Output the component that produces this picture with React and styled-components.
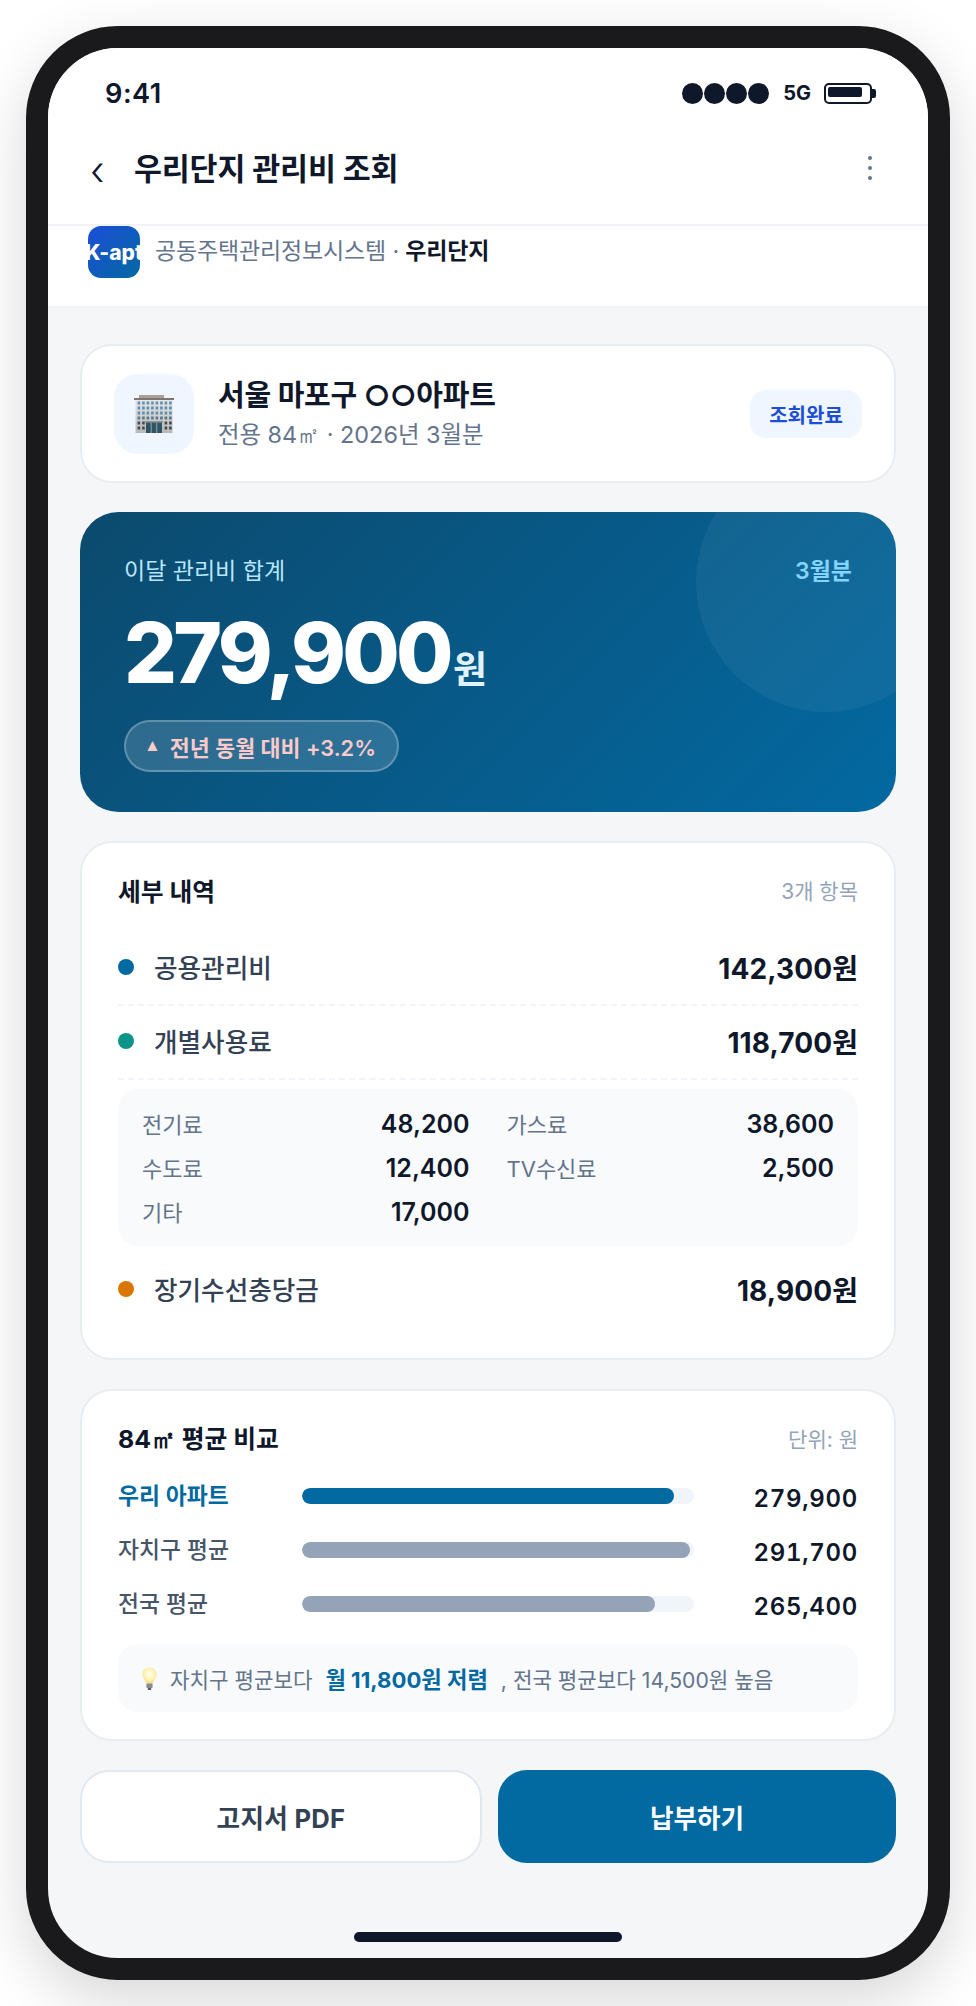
import React from "react";
import styled, { createGlobalStyle } from "styled-components";

const GlobalStyle = createGlobalStyle`
  * { box-sizing: border-box; }
  html, body { margin: 0; padding: 0; background: #fff; }
  body {
    font-family: Inter, "Noto Sans CJK KR", sans-serif;
    color: #0f172a;
  }
`;

const Page = styled.div`
  width: 976px;
  height: 2006px;
  padding: 26px;
  overflow: hidden;
`;

const Phone = styled.div`
  width: 924px;
  height: 1954px;
  border: 22px solid #1a1a1c;
  border-radius: 92px;
  background: #f5f6f8;
  box-shadow: 0 20px 60px rgba(0, 0, 0, 0.16);
  overflow: hidden;
  display: flex;
  flex-direction: column;
`;

const StatusBar = styled.div`
  height: 90px;
  flex: none;
  background: #fff;
  padding: 0 56px 0 57px;
  display: flex;
  align-items: center;
  justify-content: space-between;
`;

const Clock = styled.span`
  font-size: 27.2px;
  font-weight: 600;
  letter-spacing: 0.5px;
`;

const StatusIcons = styled.div`
  display: flex;
  align-items: center;
`;

const Signal = styled.div`
  display: flex;
  gap: 1px;
  margin-right: 14px;
`;

const SignalDot = styled.span`
  width: 21px;
  height: 21px;
  border-radius: 50%;
  background: #0f172a;
`;

const Network = styled.span`
  font-size: 20px;
  font-weight: 700;
  margin-right: 13px;
`;

const Battery = styled.div`
  position: relative;
  width: 48px;
  height: 21px;
  border: 2px solid #0f172a;
  border-radius: 5px;
  padding: 2px;
  &::after {
    content: "";
    position: absolute;
    right: -6px;
    top: 4px;
    width: 4px;
    height: 9px;
    border-radius: 0 2px 2px 0;
    background: #0f172a;
  }
`;

const BatteryFill = styled.div`
  width: 34px;
  height: 10px;
  border-radius: 2px;
  background: #0f172a;
`;

const Header = styled.header`
  height: 88px;
  flex: none;
  background: #fff;
  border-bottom: 2px solid #f1f2f6;
  padding: 0 56px 26px 42px;
  display: flex;
  align-items: center;
`;

const Back = styled.span`
  width: 44px;
  font-size: 40px;
  font-weight: 300;
  line-height: 1;
  color: #0f172a;
  margin-top: 6px;
`;

const Title = styled.h1`
  flex: 1;
  margin: -3px 0 0;
  font-size: 30.4px;
  font-weight: 700;
  letter-spacing: -0.15px;
`;

const More = styled.div`
  display: flex;
  flex-direction: column;
  gap: 6px;
`;

const MoreDot = styled.span`
  width: 4px;
  height: 4px;
  border-radius: 50%;
  background: #64748b;
`;

const SourceBar = styled.div`
  height: 82px;
  flex: none;
  background: #fff;
  border-bottom: 2px solid #f1f2f6;
  padding: 0 40px;
  display: flex;
  align-items: flex-start;
  gap: 15px;
`;

const Logo = styled.div`
  width: 52px;
  height: 52px;
  flex: none;
  border-radius: 13px;
  background: linear-gradient(135deg, #1d4ed8, #0369a1);
  color: #fff;
  font-size: 21px;
  font-weight: 800;
  display: flex;
  align-items: center;
  justify-content: center;
  overflow: hidden;
  white-space: nowrap;
`;

const SourceText = styled.div`
  font-size: 23px;
  line-height: 50px;
  color: #64748b;
  letter-spacing: -0.15px;
  b {
    color: #0f172a;
    font-weight: 600;
  }
`;

const Content = styled.main`
  padding: 36px 32px 0;
  display: flex;
  flex-direction: column;
  gap: 29px;
`;

const Card = styled.section`
  background: #fff;
  border: 2px solid #e9edf2;
  border-radius: 32px;
`;

const AptCard = styled(Card)`
  padding: 28px 32px 27px;
  display: flex;
  align-items: center;
  gap: 24px;
`;

const AptIcon = styled.div`
  width: 80px;
  height: 80px;
  flex: none;
  border-radius: 24px;
  background: #eff6ff;
  display: flex;
  align-items: center;
  justify-content: center;
`;

const AptInfo = styled.div`
  flex: 1;
`;

const AptName = styled.div`
  font-size: 29px;
  font-weight: 700;
  line-height: 40px;
  letter-spacing: -0.2px;
  margin-top: 1px;
`;

const AptMeta = styled.div`
  font-size: 23.4px;
  line-height: 38px;
  color: #64748b;
`;

const Square = styled.span`
  font-family: "DejaVu Sans", sans-serif;
`;

const Badge = styled.span`
  width: 112px;
  height: 48px;
  border-radius: 16px;
  background: #eff6ff;
  color: #1d4ed8;
  font-size: 20px;
  font-weight: 700;
  display: flex;
  align-items: center;
  justify-content: center;
`;

const Hero = styled.section`
  position: relative;
  height: 300px;
  border-radius: 38.4px;
  padding: 44px 44px 0;
  background: linear-gradient(135deg, #0c4a6e, #0369a1);
  overflow: hidden;
  color: #fff;
  &::before {
    content: "";
    position: absolute;
    top: -60px;
    right: -60px;
    width: 260px;
    height: 260px;
    border-radius: 50%;
    background: rgba(255, 255, 255, 0.05);
  }
`;

const HeroTop = styled.div`
  display: flex;
  justify-content: space-between;
  line-height: 30px;
  font-size: 23px;
  color: #bae6fd;
`;

const HeroMonth = styled.span`
  color: #7dd3fc;
  font-weight: 600;
`;

const HeroAmount = styled.div`
  margin-top: 20px;
  height: 94px;
  display: flex;
  align-items: baseline;
  gap: 3px;
  font-size: 83.2px;
  line-height: 94px;
  font-weight: 800;
  letter-spacing: -3.7px;
`;

const HeroUnit = styled.span`
  font-size: 37px;
  font-weight: 600;
  letter-spacing: 0;
  color: #e0f2fe;
`;

const Trend = styled.div`
  display: inline-flex;
  align-items: center;
  margin-top: 20px;
  height: 52px;
  padding: 0 21px 0 18px;
  border: 2px solid rgba(255, 255, 255, 0.25);
  border-radius: 26px;
  background: rgba(255, 255, 255, 0.15);
  color: #fecaca;
  font-size: 21.7px;
  font-weight: 600;
`;

const TrendArrow = styled.span`
  font-family: "Liberation Sans", sans-serif;
  font-size: 17px;
  margin-right: 9px;
`;

const DetailCard = styled(Card)`
  padding: 30px 36px 32px;
`;

const CardHead = styled.div`
  display: flex;
  justify-content: space-between;
  align-items: center;
  height: 36px;
  padding-bottom: 3px;
`;

const CardTitle = styled.h2`
  margin: 0;
  font-size: 24.8px;
  font-weight: 700;
`;

const CardHint = styled.span`
  font-size: 21px;
  color: #94a3b8;
`;

const FeeList = styled.div`
  margin-top: 23px;
`;

const FeeRow = styled.div`
  height: ${(p) => (p.$last ? "72px" : "74px")};
  padding-bottom: 3px;
  display: flex;
  align-items: center;
  border-bottom: ${(p) => (p.$last ? "none" : "2px dashed #f1f5f9")};
`;

const FeeDot = styled.span`
  width: 16px;
  height: 16px;
  border-radius: 50%;
  margin-right: 20px;
  background: ${(p) => p.$color};
`;

const FeeName = styled.span`
  flex: 1;
  font-size: 25.6px;
  font-weight: 500;
  color: #334155;
`;

const FeeValue = styled.span`
  font-size: 28px;
  font-weight: 700;
  letter-spacing: 0.1px;
`;

const SubBox = styled.div`
  margin: 9px 0 8px;
  height: 157px;
  padding: 19px 24px 0;
  border-radius: 20px;
  background: #f8fafc;
  display: grid;
  grid-template-columns: 1fr 1fr;
  grid-auto-rows: 32px;
  column-gap: 37px;
  row-gap: 12px;
`;

const SubItem = styled.div`
  display: flex;
  justify-content: space-between;
  align-items: center;
`;

const SubLabel = styled.span`
  font-size: 22px;
  color: #64748b;
  margin-top: -3px;
`;

const SubValue = styled.span`
  font-size: 25px;
  font-weight: 600;
`;

const CompareCard = styled(Card)`
  padding: 30px 36px 27px;
`;

const BarList = styled.div`
  margin-top: 12px;
`;

const BarRow = styled.div`
  height: 54px;
  display: grid;
  grid-template-columns: 184px 392px 1fr;
  align-items: center;
`;

const BarLabel = styled.span`
  font-size: 22.8px;
  font-weight: ${(p) => (p.$mine ? 600 : 500)};
  color: ${(p) => (p.$mine ? "#0369a1" : "#475569")};
  margin-top: -3px;
`;

const BarTrack = styled.div`
  height: 16px;
  border-radius: 8px;
  background: #f1f5f9;
  overflow: hidden;
`;

const BarFill = styled.div`
  height: 100%;
  border-radius: 8px;
  background: ${(p) => (p.$mine ? "#0369a1" : "#94a3b8")};
`;

const BarValue = styled.span`
  text-align: right;
  font-size: 24px;
  font-weight: 600;
  font-variant-numeric: tabular-nums;
  letter-spacing: 0.7px;
  margin-top: 4px;
`;

const Note = styled.div`
  margin-top: 13px;
  height: 68px;
  padding: 0 24px;
  border-radius: 20px;
  background: #f8fafc;
  display: flex;
  align-items: center;
  gap: 13px;
  font-size: 21.2px;
  color: #64748b;
  strong {
    color: #0369a1;
    font-size: 22.2px;
    font-weight: 700;
  }
`;

const Actions = styled.div`
  display: flex;
  gap: 16px;
`;

const ActionButton = styled.button`
  flex: 1;
  height: 93px;
  border-radius: 28.8px;
  border: ${(p) => (p.$primary ? "none" : "2px solid #e2e8f0")};
  background: ${(p) => (p.$primary ? "#0369a1" : "#fff")};
  color: ${(p) => (p.$primary ? "#fff" : "#334155")};
  font-family: inherit;
  font-size: 25.6px;
  font-weight: 700;
  letter-spacing: ${(p) => (p.$primary ? "0" : "0.3px")};
`;

const HomeArea = styled.div`
  margin-top: auto;
  padding-bottom: 16px;
  display: flex;
  justify-content: center;
`;

const HomeBar = styled.div`
  width: 268px;
  height: 10px;
  border-radius: 5px;
  background: #0f172a;
`;

const subFees = [
  ["전기료", "48,200"],
  ["가스료", "38,600"],
  ["수도료", "12,400"],
  ["TV수신료", "2,500"],
  ["기타", "17,000"],
];

const compare = [
  { label: "우리 아파트", pct: 95, value: "279,900", mine: true },
  { label: "자치구 평균", pct: 99, value: "291,700" },
  { label: "전국 평균", pct: 90, value: "265,400" },
];

// office block, same look as the emoji in the reference
const BuildingIcon = () => {
  const windows = [];
  for (let r = 0; r < 6; r++) {
    for (let c = 0; c < 8; c++) {
      if (r >= 4 && c >= 2 && c <= 5) continue;
      windows.push(
        <rect
          key={`${r}-${c}`}
          x={3.6 + c * 4.5}
          y={6.5 + r * 5}
          width="2.6"
          height="3"
          fill={r < 3 ? "#5f8fae" : r === 3 ? "#55788f" : "#3f4c55"}
        />
      );
    }
  }
  return (
    <svg width="40" height="38" viewBox="0 0 40 38">
      <defs>
        <linearGradient id="wall" x1="0" y1="0" x2="0" y2="1">
          <stop offset="0" stopColor="#e6e8ea" />
          <stop offset="1" stopColor="#b9b9b6" />
        </linearGradient>
      </defs>
      <rect x="5" y="0" width="25" height="3.5" fill="#aaa29a" />
      <rect x="1.5" y="4" width="37" height="34" fill="url(#wall)" />
      <rect x="0" y="3" width="40" height="2" fill="#7f756c" />
      {windows}
      <rect x="11" y="26" width="18" height="1.6" fill="#8f8f8c" />
      <rect x="12" y="27.5" width="16" height="10.5" fill="#2f5565" />
      <rect x="16.7" y="27.5" width="0.9" height="10.5" fill="#9fb0b8" />
      <rect x="22.3" y="27.5" width="0.9" height="10.5" fill="#9fb0b8" />
    </svg>
  );
};

const BulbIcon = () => (
  <svg width="15" height="23" viewBox="0 0 15 23">
    <defs>
      <radialGradient id="glow" cx="0.5" cy="0.42" r="0.6">
        <stop offset="0" stopColor="#fffef0" />
        <stop offset="0.6" stopColor="#fff2b3" />
        <stop offset="1" stopColor="#f6d978" />
      </radialGradient>
    </defs>
    <path
      d="M7.5 0.5C3.4 0.5 0.5 3.5 0.5 7.2c0 3.6 3 5.4 3.6 9.3h6.8c0.6-3.9 3.6-5.7 3.6-9.3C14.5 3.5 11.6 0.5 7.5 0.5z"
      fill="url(#glow)"
    />
    <rect x="4.4" y="16.5" width="6.2" height="4.5" rx="1" fill="#8b8b8b" />
    <rect x="5.6" y="21" width="3.8" height="2" rx="1" fill="#5a5a5a" />
  </svg>
);

export default function App() {
  return (
    <Page>
      <GlobalStyle />
      <Phone>
        <StatusBar>
          <Clock>9:41</Clock>
          <StatusIcons>
            <Signal>
              <SignalDot />
              <SignalDot />
              <SignalDot />
              <SignalDot />
            </Signal>
            <Network>5G</Network>
            <Battery>
              <BatteryFill />
            </Battery>
          </StatusIcons>
        </StatusBar>

        <Header>
          <Back>‹</Back>
          <Title>우리단지 관리비 조회</Title>
          <More>
            <MoreDot />
            <MoreDot />
            <MoreDot />
          </More>
        </Header>

        <SourceBar>
          <Logo>K-apt</Logo>
          <SourceText>
            공동주택관리정보시스템 · <b>우리단지</b>
          </SourceText>
        </SourceBar>

        <Content>
          <AptCard>
            <AptIcon>
              <BuildingIcon />
            </AptIcon>
            <AptInfo>
              <AptName>서울 마포구 ○○아파트</AptName>
              <AptMeta>
                전용 84<Square>㎡</Square> · 2026년 3월분
              </AptMeta>
            </AptInfo>
            <Badge>조회완료</Badge>
          </AptCard>

          <Hero>
            <HeroTop>
              <span>이달 관리비 합계</span>
              <HeroMonth>3월분</HeroMonth>
            </HeroTop>
            <HeroAmount>
              279,900<HeroUnit>원</HeroUnit>
            </HeroAmount>
            <Trend>
              <TrendArrow>▲</TrendArrow>전년 동월 대비 +3.2%
            </Trend>
          </Hero>

          <DetailCard>
            <CardHead>
              <CardTitle>세부 내역</CardTitle>
              <CardHint>3개 항목</CardHint>
            </CardHead>
            <FeeList>
              <FeeRow>
                <FeeDot $color="#0369a1" />
                <FeeName>공용관리비</FeeName>
                <FeeValue>142,300원</FeeValue>
              </FeeRow>
              <FeeRow>
                <FeeDot $color="#0d9488" />
                <FeeName>개별사용료</FeeName>
                <FeeValue>118,700원</FeeValue>
              </FeeRow>
              <SubBox>
                {subFees.map(([label, value]) => (
                  <SubItem key={label}>
                    <SubLabel>{label}</SubLabel>
                    <SubValue>{value}</SubValue>
                  </SubItem>
                ))}
              </SubBox>
              <FeeRow $last>
                <FeeDot $color="#d97706" />
                <FeeName>장기수선충당금</FeeName>
                <FeeValue>18,900원</FeeValue>
              </FeeRow>
            </FeeList>
          </DetailCard>

          <CompareCard>
            <CardHead>
              <CardTitle>
                84<Square>㎡</Square> 평균 비교
              </CardTitle>
              <CardHint>단위: 원</CardHint>
            </CardHead>
            <BarList>
              {compare.map((row) => (
                <BarRow key={row.label}>
                  <BarLabel $mine={row.mine}>{row.label}</BarLabel>
                  <BarTrack>
                    <BarFill $mine={row.mine} style={{ width: `${row.pct}%` }} />
                  </BarTrack>
                  <BarValue>{row.value}</BarValue>
                </BarRow>
              ))}
            </BarList>
            <Note>
              <BulbIcon />
              <span>자치구 평균보다</span>
              <strong>월 11,800원 저렴</strong>
              <span>, 전국 평균보다 14,500원 높음</span>
            </Note>
          </CompareCard>

          <Actions>
            <ActionButton>고지서 PDF</ActionButton>
            <ActionButton $primary>납부하기</ActionButton>
          </Actions>
        </Content>

        <HomeArea>
          <HomeBar />
        </HomeArea>
      </Phone>
    </Page>
  );
}
